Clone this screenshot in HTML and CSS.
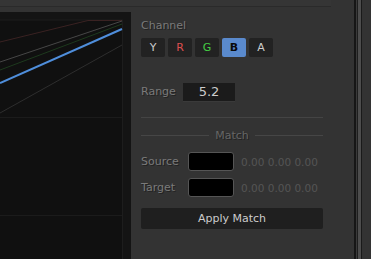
FILE: index.html
```html
<!DOCTYPE html>
<html lang="en">

<head>
    <meta charset="UTF-8">
    <meta name="viewport" content="width=device-width, initial-scale=1.0">
    <title>Curves</title>
    <link rel="stylesheet" href="styles.css">
</head>

<body>
    <div class="app">
        <div class="main">
            <div class="topbar"></div>

            <div class="row">
                <!-- curve view, cropped on the left -->
                <div class="view">
                    <svg width="131" height="247" viewBox="0 0 131 247">
                        <rect x="-2" y="8" width="124.5" height="260" fill="#101010" stroke="#1d1d1d" stroke-width="1" />
                        <line x1="0" y1="105.5" x2="122" y2="105.5" stroke="#1b1b1b" />
                        <line x1="0" y1="203.5" x2="122" y2="203.5" stroke="#1b1b1b" />
                        <polyline points="0,101 122,33" fill="none" stroke="#2e2e2e" />
                        <polyline points="0,30 88,8.5 122,8.5" fill="none" stroke="#3a2222" />
                        <polyline points="0,50 122,9" fill="none" stroke="#474747" />
                        <polyline points="0,58 122,12" fill="none" stroke="#1e3a1e" />
                        <polyline points="0,71 122,17" fill="none" stroke="#4f8edb" stroke-width="2" />
                    </svg>
                </div>

                <div class="panel">
                    <div class="label">Channel</div>
                    <div class="channels">
                        <button class="ch">Y</button>
                        <button class="ch ch-r">R</button>
                        <button class="ch ch-g">G</button>
                        <button class="ch ch-b active">B</button>
                        <button class="ch">A</button>
                    </div>

                    <div class="range">
                        <span class="label">Range</span>
                        <span class="range-box">5.2</span>
                    </div>

                    <div class="sep"></div>

                    <div class="section">
                        <span class="section-line"></span>
                        <span class="section-title">Match</span>
                        <span class="section-line"></span>
                    </div>

                    <div class="swatch-row">
                        <span class="label swatch-label">Source</span>
                        <span class="swatch"></span>
                        <span class="values">0.00 0.00 0.00</span>
                    </div>
                    <div class="swatch-row">
                        <span class="label swatch-label">Target</span>
                        <span class="swatch"></span>
                        <span class="values">0.00 0.00 0.00</span>
                    </div>

                    <button class="apply">Apply Match</button>
                </div>
            </div>
        </div>

        <div class="divider"></div>
        <div class="side"></div>
    </div>
</body>

</html>
```

FILE: styles.css
```css
body {
    margin: 0;
    background: #333333;
    font-family: "DejaVu Sans", "Liberation Sans", sans-serif;
    font-size: 11px;
    overflow: hidden;
}

.app {
    display: flex;
    height: 259px;
    width: 371px;
}

.main {
    width: 354px;
    display: flex;
    flex-direction: column;
}

.topbar {
    width: 331px;
    height: 6px;
    background: #353535;
    border-bottom: 1px solid #2a2a2a;
}

.row {
    display: flex;
    flex: 1;
}

.view {
    width: 131px;
    margin-top: 5px;
    background: #141414;
    overflow: hidden;
}

.view svg {
    display: block;
}

.panel {
    width: 182px;
    margin-left: 10px;
    padding-top: 12px;
}

.label {
    color: #7a7a7a;
    line-height: 14px;
    text-shadow: 1px 1px 0 #222;
}

/* channel buttons */
.channels {
    display: flex;
    gap: 3px;
    margin-top: 5px;
}

.ch {
    width: 24px;
    height: 19px;
    padding: 0;
    border: none;
    border-radius: 2px;
    background: #222222;
    color: #cccccc;
    font-family: inherit;
    font-size: 11px;
}

.ch-r {
    color: #dd4f4f;
}

.ch-g {
    color: #44cc44;
}

.ch-b.active {
    background: #5a8acd;
    color: #0a0a0a;
    font-weight: bold;
}

.range {
    display: flex;
    align-items: center;
    margin-top: 26px;
}

.range .label {
    width: 42px;
}

.range-box {
    width: 52px;
    height: 18px;
    line-height: 18px;
    background: #1b1b1b;
    color: #cccccc;
    font-size: 13px;
    text-align: center;
    box-shadow: 0 1px 0 #3a3a3a;
}

.sep {
    height: 1px;
    background: #444444;
    margin-top: 16px;
}

.section {
    display: flex;
    align-items: center;
    gap: 6px;
    height: 14px;
    margin-top: 10px;
}

.section-line {
    flex: 1;
    height: 1px;
    background: #464646;
}

.section-title {
    color: #666666;
    line-height: 14px;
    padding-top: 2px;
    text-shadow: 1px 1px 0 #222;
}

.swatch-row {
    display: flex;
    align-items: center;
    margin-top: 8px;
}

.swatch-row + .swatch-row {
    margin-top: 7px;
}

.section + .swatch-row {
    margin-top: 10px;
}

.swatch-label {
    width: 47px;
}

.swatch {
    width: 44px;
    height: 17px;
    background: #000000;
    border: 1px solid #555555;
    border-radius: 3px;
}

.values {
    margin-left: 7px;
    color: #555555;
    font-size: 10.5px;
}

.apply {
    display: block;
    width: 182px;
    height: 21px;
    margin-top: 11px;
    padding: 0;
    border: none;
    border-radius: 2px;
    background: #1f1f1f;
    color: #cccccc;
    font-family: inherit;
    font-size: 11px;
}

/* split bar on the right edge */
.divider {
    width: 8px;
    background: linear-gradient(to right,
            #161616 0 2px,
            #3a3a3a 2px 3px,
            #1e1e1e 3px 4px,
            #4d4d4d 4px 7px,
            #1a1a1a 7px 8px);
}

.side {
    flex: 1;
}
```
